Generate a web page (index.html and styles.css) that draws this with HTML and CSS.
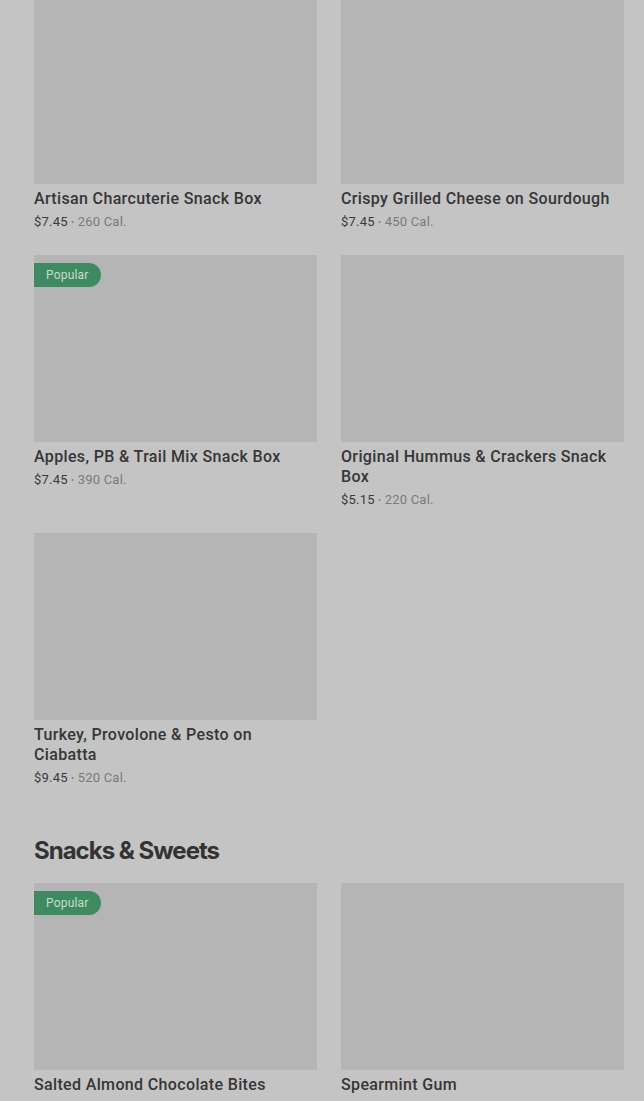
FILE: index.html
```html
<!DOCTYPE html>
<html lang="en">
<head>
<meta charset="utf-8">
<title>Menu</title>
<link rel="stylesheet" href="styles.css">
</head>
<body>
<div class="page">
  <div class="grid">
    <div class="card">
      <div class="thumb"></div>
      <div class="name">Artisan Charcuterie Snack Box</div>
      <div class="meta"><span class="price">$7.45</span> <span class="dot">•</span> 260 Cal.</div>
    </div>
    <div class="card">
      <div class="thumb"></div>
      <div class="name">Crispy Grilled Cheese on Sourdough</div>
      <div class="meta"><span class="price">$7.45</span> <span class="dot">•</span> 450 Cal.</div>
    </div>
    <div class="card">
      <div class="thumb"><span class="badge">Popular</span></div>
      <div class="name">Apples, PB &amp; Trail Mix Snack Box</div>
      <div class="meta"><span class="price">$7.45</span> <span class="dot">•</span> 390 Cal.</div>
    </div>
    <div class="card">
      <div class="thumb"></div>
      <div class="name">Original Hummus &amp; Crackers Snack Box</div>
      <div class="meta"><span class="price">$5.15</span> <span class="dot">•</span> 220 Cal.</div>
    </div>
    <div class="card">
      <div class="thumb"></div>
      <div class="name">Turkey, Provolone &amp; Pesto on Ciabatta</div>
      <div class="meta"><span class="price">$9.45</span> <span class="dot">•</span> 520 Cal.</div>
    </div>
  </div>

  <h2 class="section-title">Snacks &amp; Sweets</h2>

  <div class="grid">
    <div class="card">
      <div class="thumb"><span class="badge">Popular</span></div>
      <div class="name">Salted Almond Chocolate Bites</div>
      <div class="meta"><span class="price">$3.95</span> <span class="dot">•</span> 200 Cal.</div>
    </div>
    <div class="card">
      <div class="thumb"></div>
      <div class="name">Spearmint Gum</div>
      <div class="meta"><span class="price">$2.25</span> <span class="dot">•</span> 5 Cal.</div>
    </div>
  </div>
</div>
</body>
</html>
```

FILE: styles.css
```css
html, body {
  margin: 0;
  padding: 0;
  background: #c4c4c4;
  overflow: hidden;
}

body {
  font-family: Roboto, "Noto Sans", sans-serif;
  color: #333333;
}

.page {
  padding: 0 20px 0 34px;
  margin-top: -3px;
}

.grid {
  display: grid;
  grid-template-columns: 283px 283px;
  column-gap: 24px;
  row-gap: 23px;
}

.card {
  display: flex;
  flex-direction: column;
}

.thumb {
  position: relative;
  height: 187px;
  background: #b5b5b5;
  margin-bottom: 5px;
}

.badge {
  position: absolute;
  left: 0;
  top: 8px;
  height: 24px;
  line-height: 24px;
  padding: 0 12px;
  background: #3f8b61;
  color: #c9dccf;
  font-size: 12px;
  letter-spacing: 0.2px;
  border-radius: 0 12px 12px 0;
}

.name {
  font-size: 16px;
  font-weight: 500;
  line-height: 20px;
  color: #363636;
  letter-spacing: 0.35px;
}

.meta {
  margin-top: 3px;
  font-size: 13px;
  line-height: 20px;
  color: #7a7a7a;
  letter-spacing: 0.2px;
}

.price {
  color: #3a3a3a;
}

.dot {
  font-size: 9px;
  vertical-align: 1px;
}

.section-title {
  margin: 47px 0 16px;
  font-family: Inter, "Noto Sans", sans-serif;
  font-size: 24px;
  line-height: 32px;
  font-weight: 700;
  letter-spacing: -1px;
  color: #333333;
}
```
